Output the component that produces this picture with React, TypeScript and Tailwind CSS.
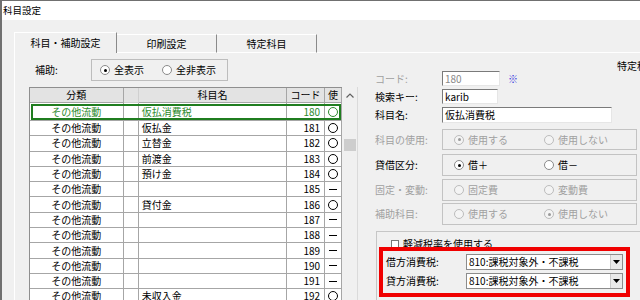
import React from "react";

type Row = { cat: string; name: string; code: string; use: "o" | "-" };

const rows: Row[] = [
  { cat: "その他流動", name: "仮払消費税", code: "180", use: "o" },
  { cat: "その他流動", name: "仮払金", code: "181", use: "o" },
  { cat: "その他流動", name: "立替金", code: "182", use: "o" },
  { cat: "その他流動", name: "前渡金", code: "183", use: "o" },
  { cat: "その他流動", name: "預け金", code: "184", use: "o" },
  { cat: "その他流動", name: "", code: "185", use: "-" },
  { cat: "その他流動", name: "貸付金", code: "186", use: "o" },
  { cat: "その他流動", name: "", code: "187", use: "-" },
  { cat: "その他流動", name: "", code: "188", use: "-" },
  { cat: "その他流動", name: "", code: "189", use: "-" },
  { cat: "その他流動", name: "", code: "190", use: "-" },
  { cat: "その他流動", name: "", code: "191", use: "-" },
  { cat: "その他流動", name: "未収入金", code: "192", use: "o" },
];

function Radio({ checked, disabled, label, w }: { checked?: boolean; disabled?: boolean; label: string; w?: string }) {
  return (
    <div className={`flex items-center gap-[4px] ${w ?? ""}`}>
      <span
        className={
          disabled
            ? "w-[10px] h-[10px] rounded-full border border-[#bcbcbc] bg-[#f4f4f4] flex items-center justify-center"
            : "w-[10px] h-[10px] rounded-full border border-[#8a8a8a] bg-white flex items-center justify-center"
        }
      >
        {checked && (
          <span className={disabled ? "w-[3px] h-[3px] rounded-full bg-[#9a9a9a]" : "w-[3px] h-[3px] rounded-full bg-black"} />
        )}
      </span>
      <span className={disabled ? "text-[#a0a0a0]" : "text-black"}>{label}</span>
    </div>
  );
}

function GroupRow({
  label,
  disabled,
  a,
  b,
  sel,
  cls,
}: {
  label: string;
  disabled?: boolean;
  a: string;
  b: string;
  sel: 0 | 1 | -1;
  cls: string;
}) {
  return (
    <div className={`flex items-center ${cls}`}>
      <div className={disabled ? "w-[67px] text-[#a0a0a0]" : "w-[67px] text-black"}>{label}</div>
      <div className="w-[195px] h-full border border-[#c3c3c3] flex items-center pl-[11px]">
        <Radio checked={sel === 0} disabled={disabled} label={a} w="w-[90px]" />
        <Radio checked={sel === 1} disabled={disabled} label={b} />
      </div>
    </div>
  );
}

function Select({ value }: { value: string }) {
  return (
    <div className="w-[157px] h-[16px] bg-white border border-[#8c8c8c] flex items-center">
      <div className="flex-1 pl-[2px] leading-none">{value}</div>
      <div className="w-[12px] h-[14px] bg-[#e9e9e9] border-l border-[#c9c9c9] flex items-center justify-center">
        <svg width="7" height="4" viewBox="0 0 7 4">
          <path d="M0 0 H7 L3.5 4 Z" fill="#000" />
        </svg>
      </div>
    </div>
  );
}

export default function App() {
  return (
    <div className="w-[640px] h-[300px] overflow-hidden bg-[#f0f0f0] border-t border-l-2 border-[#707070] flex flex-col relative text-[10px] text-black font-['Noto_Sans_CJK_JP','Noto_Sans',sans-serif] leading-none">
      {/* title bar */}
      <div className="h-[19px] shrink-0 bg-white flex items-center pl-[1px] text-[9.5px]">科目設定</div>
      <div className="h-[12px] shrink-0" />
      {/* tabs */}
      <div className="h-[21px] shrink-0 flex items-end pl-[12px]">
        <div className="w-[103px] h-[21px] border-t border-l border-white border-r border-r-[#8a8a8a] flex items-center justify-center">
          科目・補助設定
        </div>
        <div className="w-[100px] h-[19px] border-t border-white border-r border-r-[#8a8a8a] border-b border-b-white flex items-center justify-center">
          印刷設定
        </div>
        <div className="w-[100px] h-[19px] border-t border-white border-r border-r-[#8a8a8a] border-b border-b-white flex items-center justify-center">
          特定科目
        </div>
        <div className="flex-1 h-[1px] bg-white" />
      </div>
      {/* panel */}
      <div className="flex-1 ml-[12px] border-l border-white flex">
        {/* left column */}
        <div className="w-[345px] shrink-0 flex flex-col">
          <div className="mt-[6px] h-[22px] flex items-center pl-[20px]">
            <div className="w-[56px]">補助:</div>
            <div className="w-[137px] h-full border border-[#bdbdbd] flex items-center pl-[8px]">
              <Radio checked label="全表示" w="w-[62px]" />
              <Radio label="全非表示" />
            </div>
          </div>
          <div className="mt-[6px] ml-[14px] flex">
            <div className="w-[313px] border-t border-l border-[#8f8f8f] flex flex-col">
              <div className="flex h-[15px] bg-[#e3e3e3]">
                <div className="w-[94px] border-r border-b border-[#a6a6a6] flex items-center justify-center">分類</div>
                <div className="w-[15px] border-r border-b border-[#d0d0d0]" />
                <div className="w-[149px] border-r border-b border-[#a6a6a6] flex items-center justify-center">科目名</div>
                <div className="w-[38px] border-r border-b border-[#a6a6a6] flex items-center justify-center">コード</div>
                <div className="w-[17px] border-r border-b border-[#a6a6a6] flex items-center justify-center">使</div>
              </div>
              {rows.map((r, i) => {
                const sel = i === 0;
                return (
                  <div
                    key={r.code}
                    className={
                      sel
                        ? "flex h-[18px] bg-white text-[#2d8a2d] outline-2 outline-[#1f7d1f] -outline-offset-3"
                        : "flex h-[15.3px] bg-white"
                    }
                  >
                    <div className="w-[94px] border-r border-b border-[#a6a6a6] flex items-center justify-center">{r.cat}</div>
                    <div className="w-[15px] border-r border-b border-[#a6a6a6]" />
                    <div className="w-[149px] border-r border-b border-[#a6a6a6] flex items-center pl-[3px]">{r.name}</div>
                    <div className="w-[38px] border-r border-b border-[#a6a6a6] flex items-center justify-end pr-[4px]">{r.code}</div>
                    <div className="w-[17px] border-r border-b border-[#a6a6a6] flex items-center justify-center">
                      {r.use === "o" ? (
                        <span className={sel ? "w-[10px] h-[10px] rounded-full border border-[#2d8a2d]" : "w-[10px] h-[10px] rounded-full border border-black"} />
                      ) : (
                        <span className="w-[8px] h-[1px] bg-black" />
                      )}
                    </div>
                  </div>
                );
              })}
            </div>
            {/* scrollbar */}
            <div className="w-[16px] bg-[#f0f0f0] border-r border-[#dadada] flex flex-col items-center">
              <div className="h-[16px] flex items-center justify-center">
                <svg width="8" height="5" viewBox="0 0 8 5">
                  <path d="M0.5 4.5 L4 1 L7.5 4.5" stroke="#606060" strokeWidth="1.2" fill="none" />
                </svg>
              </div>
              <div className="mt-[36px] w-[12px] h-[12px] bg-[#cdcdcd]" />
            </div>
          </div>
        </div>
        {/* right column */}
        <div className="flex-1 pl-[15px] flex flex-col whitespace-nowrap">
          <div className="mt-[8px] h-[10px] pl-[242px] flex items-center">特定科目</div>
          <div className="h-[15px] flex items-center">
            <div className="w-[67px] text-[#a0a0a0]">コード:</div>
            <div className="w-[58px] h-full bg-white border-t border-l border-[#7a7a7a] border-b border-r border-b-[#e6e6e6] border-r-[#e6e6e6] flex items-center pl-[2px] text-[#8a8a8a]">
              180
            </div>
            <div className="ml-[8px] text-[#3a3ae0]">※</div>
          </div>
          <div className="mt-[3px] h-[15px] flex items-center">
            <div className="w-[67px]">検索キー:</div>
            <div className="w-[56px] h-full bg-white border-t border-l border-[#7a7a7a] border-b border-r border-b-[#e6e6e6] border-r-[#e6e6e6] flex items-center pl-[2px]">
              karib
            </div>
          </div>
          <div className="mt-[3px] h-[16px] flex items-center">
            <div className="w-[67px]">科目名:</div>
            <div className="w-[170px] h-full bg-white border-t border-l border-[#7a7a7a] border-b border-r border-b-[#e6e6e6] border-r-[#e6e6e6] flex items-center pl-[2px]">
              仮払消費税
            </div>
          </div>
          <GroupRow cls="mt-[6px] h-[21px]" label="科目の使用:" disabled a="使用する" b="使用しない" sel={0} />
          <GroupRow cls="mt-[4px] h-[22px]" label="貸借区分:" a="借＋" b="借－" sel={0} />
          <GroupRow cls="mt-[3px] h-[22px]" label="固定・変動:" disabled a="固定費" b="変動費" sel={-1} />
          <GroupRow cls="mt-[2px] h-[22px]" label="補助科目:" disabled a="使用する" b="使用しない" sel={1} />
          <div className="mt-[6px] ml-[1px] w-[300px] h-[80px] border border-[#c6c6c6] flex flex-col">
            <div className="mt-[7px] pl-[14px] flex items-center gap-[4px]">
              <span className="w-[8px] h-[8px] border border-[#777] bg-white" />
              <span>軽減税率を使用する</span>
            </div>
            <div className="mt-[5px] pl-[9px] flex items-center">
              <div className="w-[80px]">借方消費税:</div>
              <Select value="810:課税対象外・不課税" />
            </div>
            <div className="mt-[3px] pl-[9px] flex items-center">
              <div className="w-[80px]">貸方消費税:</div>
              <Select value="810:課税対象外・不課税" />
            </div>
          </div>
        </div>
      </div>
      {/* red annotation box */}
      <div className="absolute left-[377px] top-[246px] w-[251px] h-[50px] border-4 border-[#f00000] pointer-events-none" />
    </div>
  );
}
